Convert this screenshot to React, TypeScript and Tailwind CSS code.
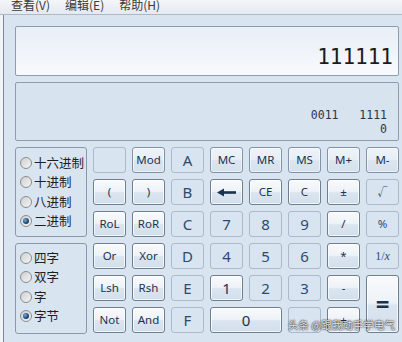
import type { ReactNode } from "react"

type Kind = "on" | "soft" | "off"

const sans = "font-['Noto_Sans','Noto_Sans_CJK_SC',sans-serif]"

function Key({ kind, children, className = "" }: { kind: Kind; children: ReactNode; className?: string }) {
  const look =
    kind === "on"
      ? "border-[#6f7e92] bg-[linear-gradient(to_bottom,#f8fafc_0%,#eef3f8_47%,#dbe5f0_53%,#d3dfec_100%)] text-[#1b324f] shadow-[inset_0_0_0_1px_rgba(255,255,255,0.7)]"
      : kind === "soft"
      ? "border-[#8293a9] bg-[linear-gradient(to_bottom,#eef3f9_0%,#e7eef6_47%,#dbe5f0_53%,#d6e1ed_100%)] text-[#1b324f] shadow-[inset_0_0_0_1px_rgba(255,255,255,0.5)]"
      : "border-[#aab9cb] bg-[#d9e4f1] text-[#2d4a6d]"
  return (
    <div className={`flex items-center justify-center rounded-[3px] border ${look} ${className}`}>
      {children}
    </div>
  )
}

const fn = "text-[11.5px]"
const big = "text-[15px]"

function Radio({ label, checked }: { label: string; checked?: boolean }) {
  return (
    <div className="flex h-[19.5px] items-center gap-[2px]">
      <span className="flex h-[12px] w-[12px] items-center justify-center rounded-full border border-[#8c8c8c] bg-[linear-gradient(135deg,#cfcfcf,#f5f5f5)]">
        {checked && (
          <span className="h-[6px] w-[6px] rounded-full bg-[radial-gradient(circle_at_35%_35%,#6fa8e0,#12395f_70%)]" />
        )}
      </span>
      <span className="text-[12.5px] leading-none text-[#1f1f1f] font-['Noto_Sans_CJK_SC',sans-serif]">{label}</span>
    </div>
  )
}

function Arrow() {
  return (
    <svg width="19" height="9" viewBox="0 0 19 9">
      <polygon points="0,4.5 7,0.5 7,8.5" fill="#1b324f" />
      <rect x="6" y="3.2" width="13" height="2.6" fill="#1b324f" />
    </svg>
  )
}

export default function App() {
  return (
    <div className={`relative h-[342px] w-[402px] overflow-hidden bg-[#d9e4f1] ${sans}`}>
      {/* menu */}
      <div className="h-[15px] overflow-hidden border-b border-[#aeb8c6] bg-[linear-gradient(to_bottom,#f4f6f9,#e4e9f0)]">
        <div className="-mt-[3px] flex gap-[15px] pl-[11px] text-[12px] leading-[16px] text-[#3a3a3a] font-['Noto_Sans_CJK_SC',sans-serif]">
          <span>查看(V)</span>
          <span>编辑(E)</span>
          <span>帮助(H)</span>
        </div>
      </div>

      <div className="flex h-[327px]">
        <div className="w-[3px] bg-[#f1f3f6]" />
        <div className="w-px bg-[#7b8797]" />
        <div className="flex-1 pl-[11px] pr-[3px] pt-[11px]">
          {/* main display */}
          <div className="flex h-[50px] items-end justify-end rounded-[2px] border border-[#8e9cb0] bg-[linear-gradient(to_bottom,#e8eef7,#f8fafd)] pb-[7px] pr-[5px]">
            <span className="text-[21px] leading-[21px] text-[#1c1c1c] font-['DejaVu_Sans_Mono',monospace]">111111</span>
          </div>

          {/* bit display */}
          <div className="mt-[6px] flex h-[59px] flex-col items-end justify-end rounded-[2px] border border-[#8e9cb0] bg-[#d8e3f0] pb-[4px] pr-[11px] text-[11.5px] leading-[13.4px] text-[#26374d] font-['DejaVu_Sans_Mono',monospace]">
            <span className="whitespace-pre">0011   1111</span>
            <span>0</span>
          </div>

          <div className="mt-[6px] flex gap-[6px]">
            {/* radio groups */}
            <div className="flex w-[72px] flex-col gap-[6px]">
              <div className="h-[90px] rounded-[3px] border border-[#8a98ab] pl-[4px] pt-[5px]">
                <Radio label="十六进制" />
                <Radio label="十进制" />
                <Radio label="八进制" />
                <Radio label="二进制" checked />
              </div>
              <div className="h-[91px] rounded-[3px] border border-[#8a98ab] pl-[4px] pt-[4px]">
                <Radio label="四字" />
                <Radio label="双字" />
                <Radio label="字" />
                <Radio label="字节" checked />
              </div>
            </div>

            {/* keys */}
            <div className="grid grid-cols-[repeat(8,33px)] grid-rows-[repeat(6,26px)] gap-[6px]">
              <Key kind="off">{""}</Key>
              <Key kind="soft" className={fn}>Mod</Key>
              <Key kind="off" className={big}>A</Key>
              <Key kind="soft" className={fn}>MC</Key>
              <Key kind="soft" className={fn}>MR</Key>
              <Key kind="soft" className={fn}>MS</Key>
              <Key kind="soft" className={fn}>M+</Key>
              <Key kind="soft" className={fn}>M-</Key>

              <Key kind="on" className={fn}>(</Key>
              <Key kind="on" className={fn}>)</Key>
              <Key kind="off" className={big}>B</Key>
              <Key kind="on"><Arrow /></Key>
              <Key kind="on" className={fn}>CE</Key>
              <Key kind="on" className={fn}>C</Key>
              <Key kind="on" className={fn}>±</Key>
              <Key kind="off" className="text-[10px]">√</Key>

              <Key kind="on" className={fn}>RoL</Key>
              <Key kind="on" className={fn}>RoR</Key>
              <Key kind="off" className={big}>C</Key>
              <Key kind="off" className={big}>7</Key>
              <Key kind="off" className={big}>8</Key>
              <Key kind="off" className={big}>9</Key>
              <Key kind="on" className={fn}>/</Key>
              <Key kind="off" className={fn}>%</Key>

              <Key kind="on" className={fn}>Or</Key>
              <Key kind="on" className={fn}>Xor</Key>
              <Key kind="off" className={big}>D</Key>
              <Key kind="off" className={big}>4</Key>
              <Key kind="off" className={big}>5</Key>
              <Key kind="off" className={big}>6</Key>
              <Key kind="on" className={fn}>*</Key>
              <Key kind="off" className="text-[12px] font-['Liberation_Serif',serif]">
                1/<i>x</i>
              </Key>

              <Key kind="on" className={fn}>Lsh</Key>
              <Key kind="on" className={fn}>Rsh</Key>
              <Key kind="off" className={big}>E</Key>
              <Key kind="on" className={big}>1</Key>
              <Key kind="off" className={big}>2</Key>
              <Key kind="off" className={big}>3</Key>
              <Key kind="on" className={fn}>-</Key>
              <Key kind="on" className="row-span-2 text-[24px] font-bold leading-none">=</Key>

              <Key kind="on" className={fn}>Not</Key>
              <Key kind="on" className={fn}>And</Key>
              <Key kind="off" className={big}>F</Key>
              <Key kind="on" className={`col-span-2 ${big}`}>0</Key>
              <Key kind="off" className={fn}>.</Key>
              <Key kind="on" className={fn}>+</Key>
            </div>
          </div>
        </div>
      </div>

      {/* watermark */}
      <div className="absolute left-[288px] top-[320px] whitespace-nowrap text-[10.5px] leading-none text-white/90 font-['Noto_Sans_CJK_SC',sans-serif] [text-shadow:0_0_2px_rgba(0,0,0,0.9),0_0_1px_rgba(0,0,0,0.9)]">
        头条 @跟我动手学电气
      </div>
    </div>
  )
}
